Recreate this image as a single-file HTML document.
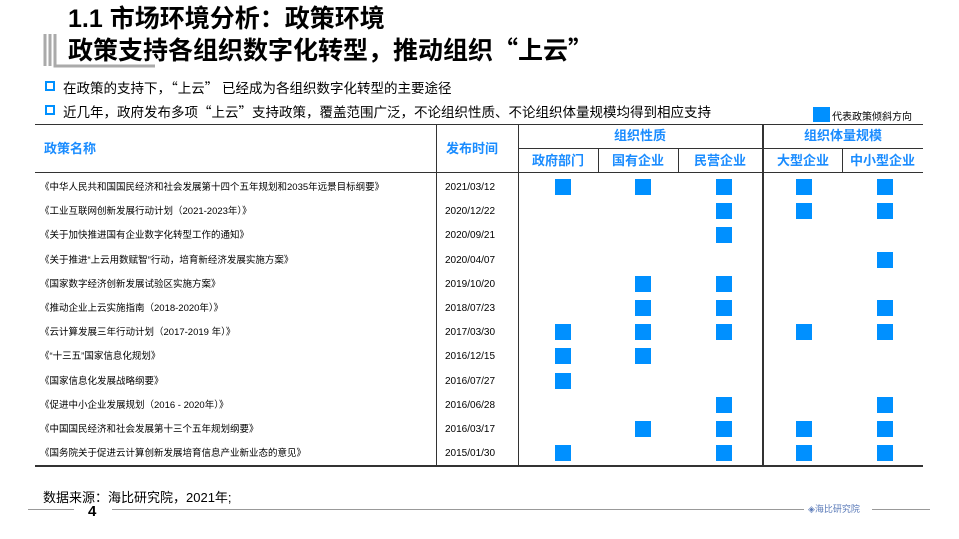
<!DOCTYPE html>
<html><head><meta charset="utf-8"><style>
*{margin:0;padding:0;box-sizing:border-box}
body{width:959px;height:539px;background:#fff;position:relative;overflow:hidden;font-family:"Liberation Sans","Noto Sans CJK SC",sans-serif;color:#000}
.a{position:absolute;white-space:nowrap}
.q{font-family:"Noto Sans CJK SC",sans-serif}
.t{font-size:25px;font-weight:bold;line-height:30px;left:68px}
.b{font-size:13.5px;left:63px;line-height:16px}
.bs{position:absolute;left:45px;width:10px;height:10px;border:2px solid #0090ff}
.h{color:#1a8cff;font-weight:bold;font-size:13px;text-align:center;line-height:16px}
.l{position:absolute;background:#333}
.n{font-size:9.5px;left:40px;line-height:12px}
.d{font-size:10px;left:445px;line-height:12px}
.s{position:absolute;width:16px;height:16px;background:#0090ff}
</style></head><body>
<div class="a t" style="top:4px">1.1 市场环境分析：政策环境</div>
<div class="a t" style="top:34px">政策支持各组织数字化转型，推动组织<span class="q">“</span>上云<span class="q">”</span></div>
<svg class="a" style="left:42px;top:32px" width="115" height="38"><path d="M3 2v32M8 2v32M13 2v32h100" stroke="#aaa" stroke-width="3" fill="none"/></svg>
<div class="bs" style="top:81px"></div><div class="a b" style="top:79px">在政策的支持下，<span class="q">“</span>上云<span class="q">”</span> 已经成为各组织数字化转型的主要途径</div>
<div class="bs" style="top:105px"></div><div class="a b" style="top:103px">近几年，政府发布多项<span class="q">“</span>上云<span class="q">”</span>支持政策，覆盖范围广泛，不论组织性质、不论组织体量规模均得到相应支持</div>
<div class="s" style="left:813px;top:107px;width:17px;height:15px"></div>
<div class="a" style="left:832px;top:108px;font-size:10px">代表政策倾斜方向</div>
<div class="l" style="left:35px;top:124px;width:888px;height:1px"></div>
<div class="l" style="left:518px;top:148px;width:405px;height:1px"></div>
<div class="l" style="left:35px;top:172px;width:888px;height:1px"></div>
<div class="l" style="left:35px;top:465px;width:888px;height:2px"></div>
<div class="l" style="left:436px;top:124px;width:1px;height:341px"></div>
<div class="l" style="left:518px;top:124px;width:1px;height:341px"></div>
<div class="l" style="left:762px;top:124px;width:2px;height:341px"></div>
<div class="l" style="left:598px;top:148px;width:1px;height:24px"></div>
<div class="l" style="left:678px;top:148px;width:1px;height:24px"></div>
<div class="l" style="left:842px;top:148px;width:1px;height:24px"></div>
<div class="a h" style="left:44px;top:141px">政策名称</div>
<div class="a h" style="left:446px;top:141px">发布时间</div>
<div class="a h" style="left:518px;top:128px;width:244px">组织性质</div>
<div class="a h" style="left:763px;top:128px;width:160px">组织体量规模</div>
<div class="a h" style="left:518px;top:153px;width:80px">政府部门</div>
<div class="a h" style="left:598px;top:153px;width:80px">国有企业</div>
<div class="a h" style="left:678px;top:153px;width:84px">民营企业</div>
<div class="a h" style="left:763px;top:153px;width:80px">大型企业</div>
<div class="a h" style="left:842px;top:153px;width:81px">中小型企业</div>
<div id="rows"></div>
<div class="a" style="left:43px;top:487px;font-size:13px">数据来源：海比研究院，2021年;</div>
<div class="l" style="left:28px;top:509px;width:46px;height:1px;background:#999"></div>
<div class="a" style="left:88px;top:503px;font-size:15px;font-weight:bold">4</div>
<div class="l" style="left:112px;top:509px;width:692px;height:1px;background:#999"></div>
<div class="a" style="left:808px;top:502px;font-size:9px;color:#5a7ab8">◈海比研究院</div>
<div class="l" style="left:872px;top:509px;width:58px;height:1px;background:#999"></div>
<script>
var R=[["《中华人民共和国国民经济和社会发展第十四个五年规划和2035年远景目标纲要》","2021/03/12",[1,1,1,1,1]],
["《工业互联网创新发展行动计划（2021-2023年）》","2020/12/22",[0,0,1,1,1]],
["《关于加快推进国有企业数字化转型工作的通知》","2020/09/21",[0,0,1,0,0]],
["《关于推进“上云用数赋智”行动，培育新经济发展实施方案》","2020/04/07",[0,0,0,0,1]],
["《国家数字经济创新发展试验区实施方案》","2019/10/20",[0,1,1,0,0]],
["《推动企业上云实施指南（2018-2020年）》","2018/07/23",[0,1,1,0,1]],
["《云计算发展三年行动计划（2017-2019 年）》","2017/03/30",[1,1,1,1,1]],
["《“十三五”国家信息化规划》","2016/12/15",[1,1,0,0,0]],
["《国家信息化发展战略纲要》","2016/07/27",[1,0,0,0,0]],
["《促进中小企业发展规划（2016 - 2020年）》","2016/06/28",[0,0,1,0,1]],
["《中国国民经济和社会发展第十三个五年规划纲要》","2016/03/17",[0,1,1,1,1]],
["《国务院关于促进云计算创新发展培育信息产业新业态的意见》","2015/01/30",[1,0,1,1,1]]];
var X=[555,635,716,796,877],h="";
R.forEach(function(r,i){var y=179+i*24.2;
h+='<div class="a n" style="top:'+(y+3)+'px">'+r[0]+'</div><div class="a d" style="top:'+(y+3)+'px">'+r[1]+'</div>';
r[2].forEach(function(v,j){if(v)h+='<div class="s" style="left:'+X[j]+'px;top:'+y+'px"></div>';});});
document.getElementById("rows").innerHTML=h;
</script>
</body></html>
